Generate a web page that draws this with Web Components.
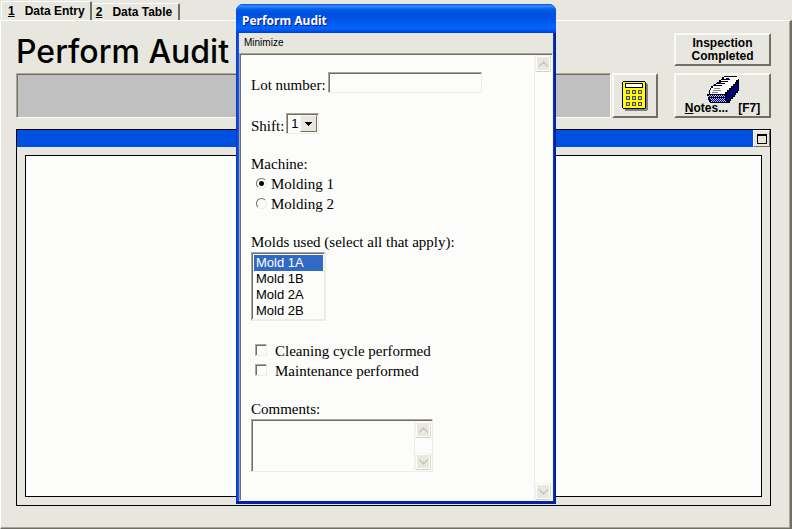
<!DOCTYPE html>
<html lang="en">
<head>
<meta charset="utf-8">
<title>Perform Audit</title>
<style>
  html, body { height: 100%; margin: 0; }
  body {
    --face: #e8e7df;
    --paper: #fcfcfa;
    --shade: #aca899;
    --dark: #716f64;
    --blue: #0050e0;
    font: 12px/15px "Liberation Sans", Arial, sans-serif;
    color: #000;
    background: var(--face);
  }
</style>
</head>
<body>
<audit-app></audit-app>

<script>
"use strict";

class BaseElement extends HTMLElement {
  constructor() {
    super();
    this.attachShadow({mode: "open"});
    this.shadowRoot.innerHTML = `<style>*{box-sizing:border-box}${this.css()}</style>${this.html()}`;
  }

  css() { return ""; }
  html() { return "<slot></slot>"; }
}

customElements.define("page-tabs", class extends BaseElement {
  css() {
    return `
      :host { display: block; height: 20px; }
      nav { display: flex; align-items: flex-end; height: 100%; padding-left: 1px; }
      button {
        height: 17px; padding: 0 6px 0 4px; border: 0 solid; border-width: 1px 2px 0 0;
        border-color: #fff var(--dark) #fff #fff; border-radius: 2px 2px 0 0;
        background: var(--face); font: bold 12px/15px "Liberation Sans", Arial, sans-serif;
        color: #000; white-space: pre; text-align: left;
      }
      button.on { height: 19px; padding: 0 5px 0 6px; border-left-width: 1px; }
    `;
  }
  html() {
    return `<nav role="tablist">
      <button class="on" role="tab" aria-selected="true"><u>1</u>   Data Entry</button>
      <button role="tab" aria-selected="false"><u>2</u>   Data Table</button>
    </nav>`;
  }
});

customElements.define("tool-button", class extends BaseElement {
  css() {
    return `
      :host { display: flex; }
      button {
        flex: 1; display: flex; flex-direction: column; align-items: center; justify-content: center;
        padding: 0; border: 2px solid; border-color: #fafaf5 var(--dark) var(--dark) #fafaf5;
        background: var(--face); color: #000;
        font: bold 12px/13px "Liberation Sans", Arial, sans-serif; white-space: pre;
      }
    `;
  }
  html() { return `<button type="button"><slot></slot></button>`; }
});

customElements.define("calculator-icon", class extends BaseElement {
  css() { return ":host, svg { display: block; }"; }
  html() {
    let keys = "";
    for (const y of [9, 15, 21]) {
      for (const x of [4, 10, 16]) {
        keys += `<path fill="#505050" d="M${x} ${y}h4v4h-4z"/><path fill="#c0c0c0" d="M${x + 1} ${y + 1}h2v2h-2z"/>`;
      }
    }
    return `<svg width="27" height="30" viewBox="0 0 27 30" shape-rendering="crispEdges" role="img" aria-label="Calculator">
      <path fill="#808080" d="M3 2h22v1h1v26h-1v1H3z"/>
      <path fill="#000" d="M1 0h22v1h1v26h-1v1H1v-1H0V1h1z"/>
      <path fill="#ff0" d="M1 1h22v26H1z"/>
      <path fill="#000" d="M3 2h18v5H3z"/><path fill="#fff" d="M4 3h16v3H4z"/>
      ${keys}</svg>`;
  }
});

customElements.define("card-file-icon", class extends BaseElement {
  css() { return ":host { display: block; margin: -1px 0; } svg { display: block; }"; }
  html() {
    // back card first, each one overlaps the card behind it
    const cards = [[15, 0], [12, 3], [10, 5], [7, 7], [4, 9]].map(([x, y]) =>
      `<path fill="#000" d="M${x + 2} ${y}h13v1h1v8H${x - 2}V${y + 5}h1v-2h1v-2h2z"/>
       <path fill="#fff" d="M${x + 2} ${y + 1}h9v-1h5v10H${x - 1}V${y + 5}h1v-2h2z"/>`).join("");
    return `<svg width="32" height="27" viewBox="0 0 32 27" shape-rendering="crispEdges" role="img" aria-label="Card file">
      <defs><pattern id="dots" width="2" height="2" patternUnits="userSpaceOnUse">
        <path fill="#c0c0ff" d="M0 0h2v2H0z"/><path fill="#000080" d="M0 0h1v1H0zM1 1h1v1H1z"/>
      </pattern></defs>
      ${cards}
      <path fill="#000" d="M17 0h13v1H17z"/>
      <path fill="#fff" d="M3 15h16v3H3z"/>
      <path fill="#000080" d="M19 2h3v2h-3zM11 6h3v2h-3z"/>
      <path fill="#808080" d="M7 12h6v1H7zM6 14h8v1H6zM5 16h6v1H5z"/>
      <path fill="#000" d="M31 3h1v12h-1v2h-2v2h-1v2h-2v2h-2v2h-1v2H3v-1H2v-2H1v-4H0v-2h18v-2h2v-2h2v-2h2v-2h2V8h2V6h1V4h2z"/>
      <path fill="#000080" d="M30 5h1v10h-1v1h-2v2h-1v2h-2v2h-2v2h-2v1h-2v-6h1v-2h2v-2h2v-2h2v-2h2V9h1V7h2z"/>
      <path fill="url(#dots)" d="M1 19h17v2H1zM2 22h16v2H3v-1H2zM4 24h15v2H4z"/>
    </svg>`;
  }
});

customElements.define("chart-pane", class extends BaseElement {
  css() {
    return `
      :host { display: flex; flex-direction: column; border: 1px solid #000; }
      header { display: flex; justify-content: flex-end; height: 17px; background: var(--blue); }
      button {
        width: 17px; padding: 0; border: 1px solid; border-color: #fff var(--dark) var(--dark) #fff;
        background: var(--face); display: grid; place-items: center;
      }
      .canvas { flex: 1; margin: 8px; border: 1px solid #000; background: var(--paper); }
    `;
  }
  html() {
    return `<header><button type="button" aria-label="Maximize">
        <svg width="10" height="10" shape-rendering="crispEdges"><path d="M0 0h10v10H0zM1 2v7h8V2z" fill-rule="evenodd"/></svg>
      </button></header>
      <div class="canvas"></div>`;
  }
});

customElements.define("scroll-rail", class extends BaseElement {
  css() {
    return `
      :host {
        display: flex; flex-direction: column; justify-content: space-between;
        width: 17px; border-left: 1px solid #eeeee8; background: var(--paper);
      }
      button {
        height: 17px; padding: 0; display: grid; place-items: center;
        border: 1px solid; border-color: #f4f4ee #dcdbd0 #d0cec0 #f4f4ee;
        border-radius: 2px; box-shadow: inset 0 0 0 1px #fff; background: #e9e8e0;
      }
    `;
  }
  html() {
    const arrow = (d) => `<svg width="9" height="7" shape-rendering="crispEdges"><path fill="#c9c7ba" d="${d}"/></svg>`;
    return `<button type="button" aria-label="Scroll up" disabled>${arrow("M4 1h1v1h1v1h1v1h1v1h1v2H8V6H7V5H6V4H3v1H2v1H1v1H0V5h1V4h1V3h1V2h1z")}</button>
      <button type="button" aria-label="Scroll down" disabled>${arrow("M4 7h1V6h1V5h1V4h1V3h1V1H8v1H7v1H6v1H3V3H2V2H1V1H0v2h1v1h1v1h1v1h1z")}</button>`;
  }
});

customElements.define("audit-form", class extends BaseElement {
  css() {
    return `
      :host { display: block; padding: 17px 10px; font: 15px/20px "Liberation Serif", "Times New Roman", serif; }
      form { display: flex; flex-direction: column; gap: 18px; }
      fieldset { margin: 0; padding: 0; border: 0; }
      legend { padding: 0; }
      .row { display: flex; align-items: flex-end; gap: 2px; height: 23px; }
      .row > :not(label) { align-self: flex-start; }
      input[type=text], .combo, .list, .memo, input[type=checkbox] {
        border: 1px solid; border-color: var(--shade) #eeede4 #eeede4 var(--shade); border-radius: 0;
        box-shadow: inset 1px 1px var(--dark);
        background: var(--paper); font: 13px/16px "Liberation Sans", Arial, sans-serif; color: #000;
      }
      input[type=text] { width: 154px; height: 21px; padding: 1px 3px; }
      .combo { display: grid; width: 33px; height: 21px; padding: 1px; }
      .combo > * { grid-area: 1 / 1; }
      .combo select {
        appearance: none; width: 100%; padding: 0 3px; border: 0; background: transparent;
        font: inherit; color: inherit;
      }
      .combo span {
        justify-self: end; width: 17px; display: grid; place-items: center; pointer-events: none;
        border: 1px solid; border-color: #f8f8f4 var(--dark) var(--dark) #f8f8f4; background: var(--face);
      }
      .choice { display: flex; align-items: center; height: 20px; }
      .choice input { appearance: none; flex: none; margin: 0; }
      .choice input[type=radio] {
        width: 11px; height: 11px; margin: 0 4px 2px 5px; border-radius: 50%;
        border: 1px solid; border-color: var(--dark) #eeede4 #eeede4 var(--dark);
      }
      .choice input[type=radio]:checked { background: radial-gradient(circle, #000 2px, transparent 3px); }
      .choice input[type=checkbox] { width: 12px; height: 12px; margin: 0 8px 2px 4px; }
      .field { display: flex; flex-direction: column; align-items: flex-start; }
      .list {
        width: 75px; height: 69px; padding: 2px 1px 0 2px; margin-bottom: 2px; overflow: hidden;
        border-right-width: 2px; border-bottom-width: 2px;
      }
      .list option { min-height: 16px; padding: 0 2px; }
      .list option:checked { background: linear-gradient(#316ac5, #316ac5); color: #fff; -webkit-text-fill-color: #fff; }
      .memo { display: flex; width: 182px; height: 53px; padding: 1px; }
      textarea {
        flex: 1; min-width: 0; margin: 1px 0 0 1px; padding: 1px; border: 0; resize: none; overflow: hidden;
        background: var(--paper); font: inherit;
      }
    `;
  }
  html() {
    return `<form>
      <div class="row"><label for="lot">Lot number:</label><input id="lot" type="text"></div>
      <div class="row"><label for="shift">Shift:</label><div class="combo">
        <select id="shift"><option>1</option><option>2</option><option>3</option></select>
        <span><svg width="7" height="4" shape-rendering="crispEdges"><path d="M0 0h7v1H6v1H5v1H4v1H3V3H2V2H1V1H0z"/></svg></span>
      </div></div>
      <fieldset>
        <legend>Machine:</legend>
        <label class="choice"><input type="radio" name="machine" checked>Molding 1</label>
        <label class="choice"><input type="radio" name="machine">Molding 2</label>
      </fieldset>
      <div class="field">
        <label for="molds">Molds used (select all that apply):</label>
        <select class="list" id="molds" multiple size="4">
          <option selected>Mold 1A</option><option>Mold 1B</option><option>Mold 2A</option><option>Mold 2B</option>
        </select>
      </div>
      <div>
        <label class="choice"><input type="checkbox">Cleaning cycle performed</label>
        <label class="choice"><input type="checkbox">Maintenance performed</label>
      </div>
      <div class="field">
        <label for="comments">Comments:</label>
        <div class="memo"><textarea id="comments"></textarea><scroll-rail></scroll-rail></div>
      </div>
    </form>`;
  }
});

customElements.define("xp-window", class extends BaseElement {
  css() {
    return `
      :host {
        display: flex; flex-direction: column; box-sizing: border-box; padding: 0 3px 3px;
        border-radius: 7px 7px 0 0; overflow: hidden;
        background: linear-gradient(90deg, #0831d9, #1660e8 3px, #0a3fd0 calc(100% - 3px), #00138c);
        box-shadow: inset 0 -3px #0420a8;
      }
      header {
        height: 29px; margin: 0 -3px; padding: 0 6px;
        font: bold 12px/33px "Noto Sans", "Trebuchet MS", sans-serif;
        color: #fff; text-shadow: 1px 1px #0a1883;
        background: linear-gradient(#0a48d0, #3090ff 2px, #0560e8 5px, #0050e0 9px, #0055e8 16px, #0066ff 24px, #0058f0 26px, #003dd0);
      }
      nav { height: 20px; background: var(--face); }
      nav button {
        height: 19px; padding: 0 5px; border: 0; background: none; color: #000;
        font: 10px/17px "Liberation Sans", Tahoma, sans-serif;
      }
      .body {
        flex: 1; display: flex; padding: 1px 1px 0; background: var(--paper); border: 1px solid;
        border-color: var(--shade) #f4f3ec #f4f3ec var(--shade);
        box-shadow: inset 1px 1px var(--dark);
      }
      .body div { flex: 1; }
    `;
  }
  html() {
    return `<header><slot name="title"></slot></header>
      <nav><button type="button">Minimize</button></nav>
      <div class="body"><div><slot></slot></div><scroll-rail></scroll-rail></div>`;
  }
});

customElements.define("audit-app", class extends BaseElement {
  css() {
    return `
      :host { display: flex; flex-direction: column; position: relative; min-height: 100vh; }
      main {
        flex: 1; display: flex; flex-direction: column; gap: 11px;
        padding: 12px 19px 22px 15px; border: 1px solid;
        border-color: #fff var(--dark) var(--dark) #fff; border-right-width: 2px;
        box-shadow: inset -1px -1px var(--shade);
      }
      .top { display: grid; grid-template-columns: 1fr 97px; grid-template-rows: 33px 45px; gap: 7px 16px; }
      h1 { margin: 0; font: 500 32px/38px Inter, "Liberation Sans", sans-serif; }
      .status { display: flex; gap: 1px; }
      .status div {
        flex: 1; background: #c0c0c0; border: 1px solid;
        border-color: var(--shade) #fafaf5 #fafaf5 var(--shade);
        box-shadow: inset 1px 1px var(--dark);
      }
      .status tool-button { width: 46px; }
      chart-pane { flex: 1; }
      xp-window { position: absolute; top: 4px; bottom: 25px; left: calc(50% - 160px); width: 320px; }
    `;
  }
  html() {
    return `<page-tabs></page-tabs>
      <main>
        <div class="top">
          <h1>Perform Audit</h1>
          <tool-button>Inspection\nCompleted</tool-button>
          <div class="status"><div></div><tool-button><calculator-icon></calculator-icon></tool-button></div>
          <tool-button><card-file-icon></card-file-icon><span><u>N</u>otes...   [F7]</span></tool-button>
        </div>
        <chart-pane></chart-pane>
      </main>
      <xp-window><span slot="title">Perform Audit</span><audit-form></audit-form></xp-window>`;
  }
});
</script>
</body>
</html>
